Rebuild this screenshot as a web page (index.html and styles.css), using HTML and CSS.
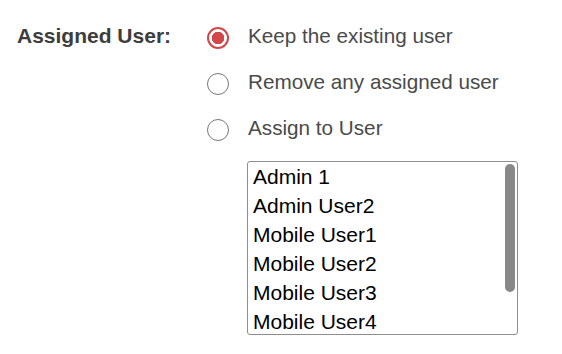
FILE: index.html
```html
<!DOCTYPE html>
<html lang="en">
<head>
    <meta charset="UTF-8">
    <title>Assigned User</title>
    <link rel="stylesheet" href="styles.css">
</head>
<body>

    <div class="field">
        <div class="field-label">Assigned User:</div>

        <div class="options">
            <label class="option">
                <input type="radio" name="assign" value="keep" checked>
                <span>Keep the existing user</span>
            </label>
            <label class="option">
                <input type="radio" name="assign" value="remove">
                <span>Remove any assigned user</span>
            </label>
            <label class="option">
                <input type="radio" name="assign" value="assign">
                <span>Assign to User</span>
            </label>

            <div class="user-list">
                <div class="user-item">Admin 1</div>
                <div class="user-item">Admin User2</div>
                <div class="user-item">Mobile User1</div>
                <div class="user-item">Mobile User2</div>
                <div class="user-item">Mobile User3</div>
                <div class="user-item">Mobile User4</div>
                <div class="scroll-thumb"></div>
            </div>
        </div>
    </div>

</body>
</html>
```

FILE: styles.css
```css
body {
    margin: 0;
    padding: 15px 0 0 17px;
    font-family: 'Liberation Sans', Arial, sans-serif;
    background-color: #fff;
}
.field {
    display: flex;
}
.field-label {
    width: 190px;
    font-size: 21px;
    font-weight: bold;
    line-height: 42px;
    color: #3d3d3d;
}
.options {
    display: flex;
    flex-direction: column;
}
.option {
    display: flex;
    align-items: center;
    height: 46px;
    font-size: 20.7px;
    color: #4a4a4a;
    cursor: pointer;
}
.option span {
    margin-left: 19px;
    margin-top: -4px;
}
.option input {
    appearance: none;
    -webkit-appearance: none;
    margin: 0;
    width: 22px;
    height: 22px;
    border: 1.5px solid #777;
    border-radius: 50%;
    background: #fff;
    box-sizing: border-box;
}
.option input:checked {
    border: 2px solid #d2474a;
    background: radial-gradient(circle, #d2474a 0 6px, #fff 6.5px);
}
.user-list {
    position: relative;
    width: 271px;
    height: 174px;
    margin: 8px 0 0 40px;
    box-sizing: border-box;
    border: 1px solid #8e8e8e;
    border-radius: 3px;
    padding-left: 5px;
    overflow: hidden;
    font-size: 21px;
    line-height: 29px;
    color: #000;
}
.scroll-thumb {
    position: absolute;
    top: 2px;
    right: 2px;
    width: 10px;
    height: 128px;
    border-radius: 5px;
    background: #888;
}
```
